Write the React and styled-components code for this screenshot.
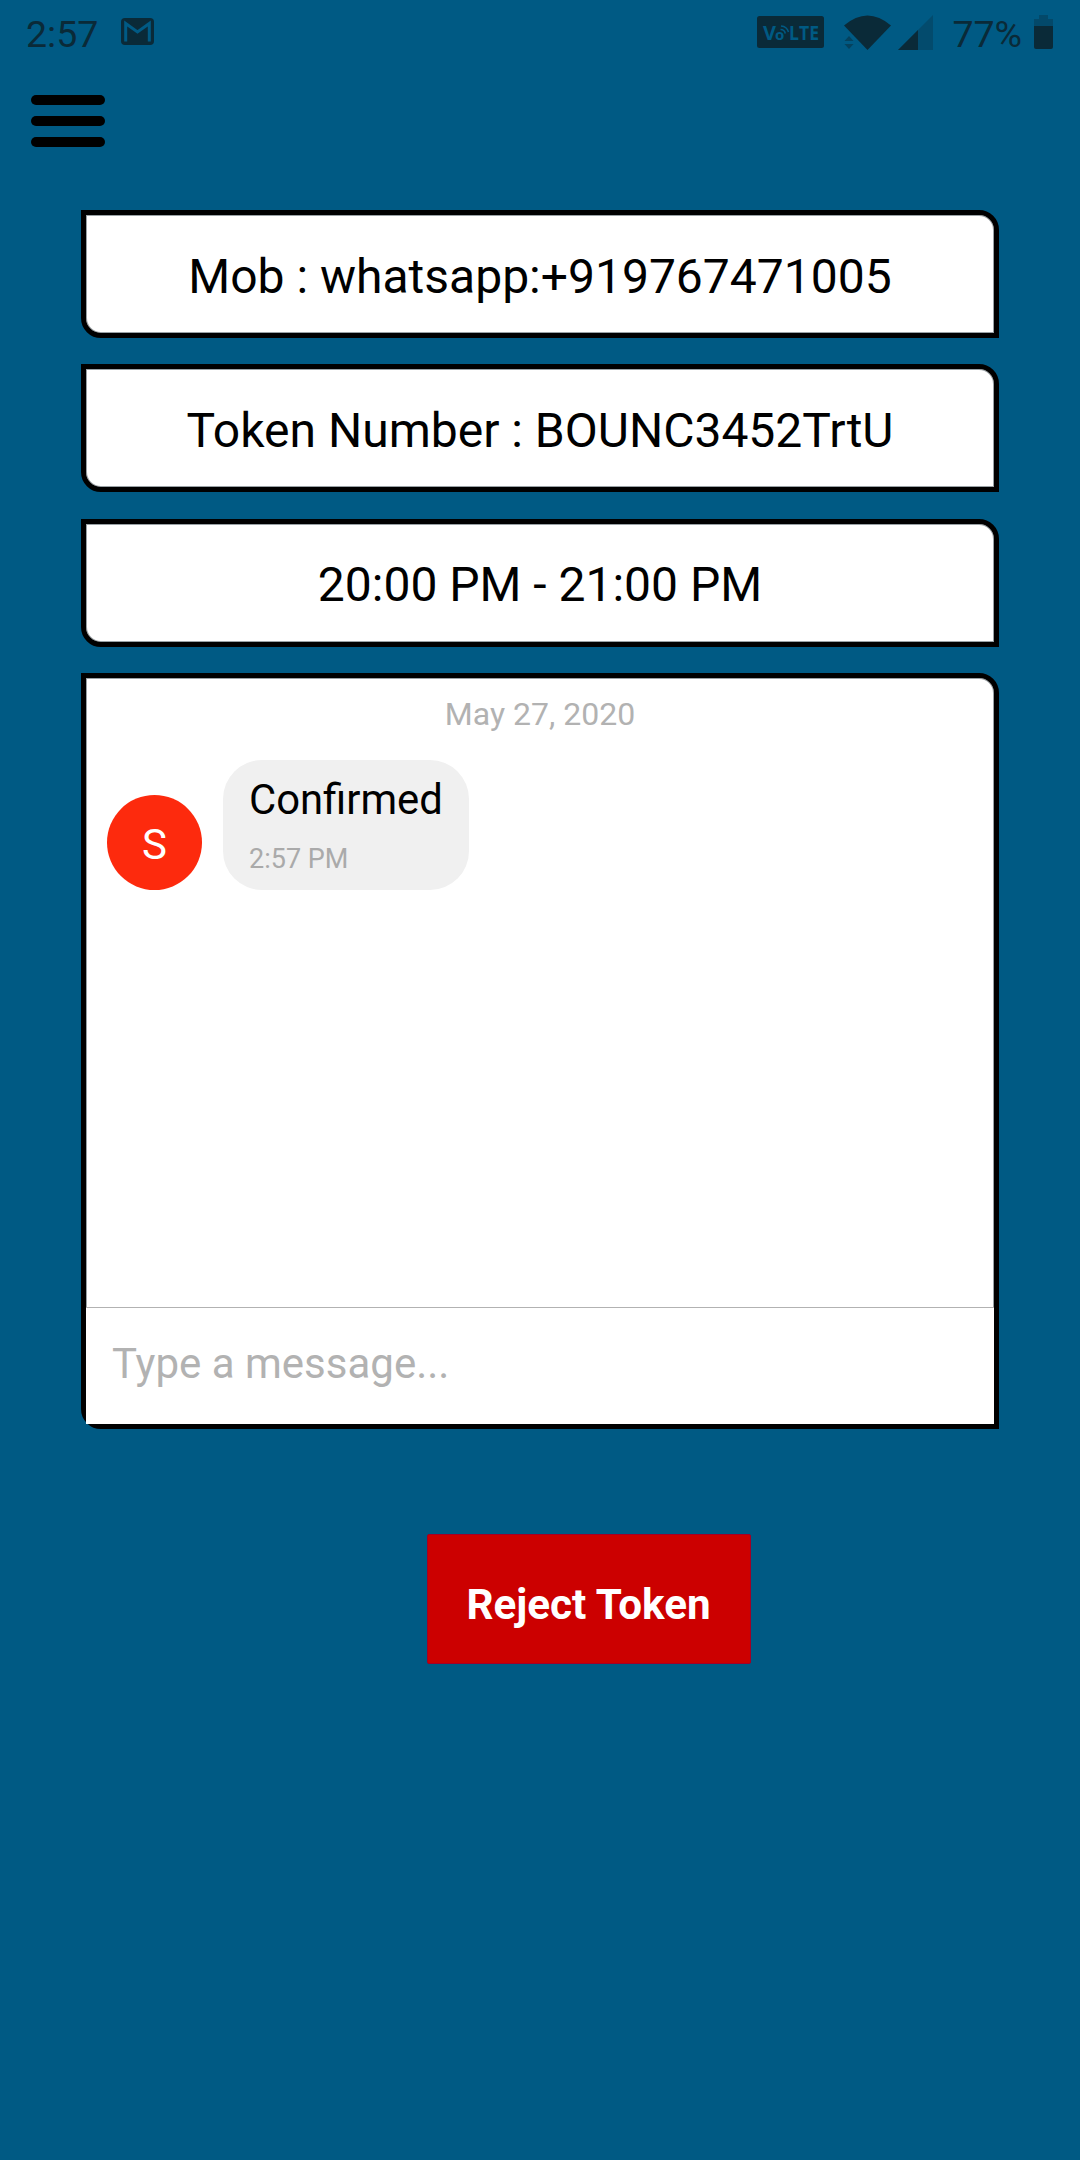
import React from "react";
import styled, { createGlobalStyle } from "styled-components";

const BLUE = "#005a84";
const INK = "#0a2a38";

const Global = createGlobalStyle`
  *, *::before, *::after { box-sizing: border-box; }
  html, body { margin: 0; padding: 0; background: ${BLUE}; }
  body { font-family: Roboto, "Liberation Sans", sans-serif; }
`;

const Screen = styled.main`
  display: flex;
  flex-direction: column;
  width: 1080px;
  height: 2160px;
  background: ${BLUE};
  color: #000;
  overflow: hidden;
`;

const StatusBar = styled.header`
  display: flex;
  align-items: center;
  justify-content: space-between;
  height: 63px;
  padding: 4px 27px 0 26px;
  color: ${INK};
`;

const StatusGroup = styled.div`
  display: flex;
  align-items: center;
`;

const StatusText = styled.span`
  margin-left: ${(p) => p.$gap || 0}px;
  font-size: 37.5px;
  line-height: 44px;
`;

const Icon = styled.svg`
  display: block;
  flex: none;
  margin-left: ${(p) => p.$gap || 0}px;
  margin-top: ${(p) => p.$drop || 0}px;
`;

const MenuButton = styled.button`
  display: flex;
  flex-direction: column;
  gap: 11px;
  width: 74px;
  margin: 32px 0 0 31px;
  padding: 0;
  border: 0;
  background: none;
`;

const MenuBar = styled.span`
  height: 10px;
  border-radius: 5px;
  background: #000;
`;

const Content = styled.section`
  display: flex;
  flex-direction: column;
  align-items: stretch;
  gap: 26.4px;
  width: 918px;
  margin: 63px 0 0 81px;
`;

const Panel = styled.div`
  border: 5px solid #000;
  border-radius: 0 20px 0 20px;
  background: #fff;
  box-shadow: inset 0 0 0 1px rgba(0, 20, 30, 0.4);
`;

const InfoCard = styled(Panel)`
  display: flex;
  align-items: center;
  justify-content: center;
  height: 128px;
  padding-top: 5px;
  font-size: 48px;
  line-height: 56px;
  white-space: nowrap;
`;

const Chat = styled(Panel)`
  display: flex;
  flex-direction: column;
  height: 756px;
`;

const Messages = styled.div`
  display: flex;
  flex: 1;
  flex-direction: column;
`;

const DateLabel = styled.div`
  margin-top: 18px;
  color: #b2b2b2;
  font-size: 32px;
  line-height: 37px;
  text-align: center;
`;

const MessageRow = styled.div`
  display: flex;
  align-items: flex-end;
  gap: 21px;
  margin: 27px 0 0 21px;
`;

const Avatar = styled.div`
  display: flex;
  align-items: center;
  justify-content: center;
  width: 95px;
  height: 95px;
  padding-top: 3px;
  border-radius: 50%;
  background: #fd2a0d;
  color: #fff;
  font-size: 42px;
`;

const Bubble = styled.div`
  width: 246px;
  height: 130px;
  padding: 14px 0 0 26px;
  border-radius: 39px;
  background: #f0f0f0;
`;

const MessageText = styled.div`
  font-size: 41.8px;
  line-height: 52px;
`;

const MessageTime = styled.div`
  margin-top: 18px;
  color: #aaa;
  font-size: 27px;
  line-height: 31px;
`;

const Composer = styled.input`
  display: block;
  width: 100%;
  height: 117px;
  padding: 0 26px 5px;
  border: 0;
  border-top: 1px solid #b2b2b2;
  border-radius: 0;
  outline: 0;
  background: #fff;
  font: 42px Roboto, "Liberation Sans", sans-serif;
  &::placeholder { color: #b2b2b2; opacity: 1; }
`;

const RejectButton = styled.button`
  align-self: flex-start;
  width: 324px;
  height: 130px;
  margin: 105px 0 0 427px;
  padding: 11px 1px 0 0;
  border: 1px solid #a30026;
  border-radius: 2px;
  background: #cc0000;
  color: #fff;
  font: 700 42.2px Roboto, "Liberation Sans", sans-serif;
`;

const details = [
  "Mob : whatsapp:+919767471005",
  "Token Number : BOUNC3452TrtU",
  "20:00 PM - 21:00 PM",
];

const GmailIcon = () => (
  <Icon width="33" height="27" viewBox="0 0 33 27" $gap={23} $drop={-4}>
    <rect width="33" height="27" rx="4" fill={INK} />
    <path d="M4.7 23.5V5.5L16.5 14L28.3 5.5V23.5" fill="none" stroke={BLUE} strokeWidth="3" />
  </Icon>
);

const VolteIcon = () => (
  <Icon width="67" height="32" viewBox="0 0 67 32" $drop={-3}>
    <rect width="67" height="32" rx="2.5" fill={INK} />
    <g fill={BLUE} fontFamily="Open Sans, sans-serif" fontWeight="700">
      <text x="6" y="24" fontSize="19" textLength="13" lengthAdjust="spacingAndGlyphs">V</text>
      <text x="18" y="24" fontSize="15">o</text>
      <text x="32" y="24" fontSize="19" textLength="30" lengthAdjust="spacingAndGlyphs">LTE</text>
    </g>
    <path d="M23.5 13.5q4 0 4.800 4M24 10q6 .5 7.500 6" fill="none" stroke={BLUE} strokeWidth="1.5" />
  </Icon>
);

const WifiIcon = () => (
  <Icon width="47" height="35" viewBox="0 0 47 35" $gap={20} $drop={-3}>
    <path d="M0 10.5Q23.5 -9.5 47 10.5L23.5 35Z" fill={INK} />
    <path d="M0.5 26l4.5-5 4.5 5zM0.5 29h9l-4.5 5z" fill={INK} opacity=".5" />
  </Icon>
);

const SignalIcon = () => (
  <Icon width="35" height="35" viewBox="0 0 35 35" $gap={7} $drop={-3}>
    <path d="M0 35L35 0V35Z" fill={INK} opacity=".3" />
    <path d="M0 35L20 15V35Z" fill={INK} />
  </Icon>
);

const BatteryIcon = () => (
  <Icon width="19" height="34" viewBox="0 0 19 34" $gap={12} $drop={-4}>
    <path d="M0 11V4H5V0H14V4H19V11Z" fill={INK} opacity=".35" />
    <path d="M0 11H19V32a2 2 0 0 1-2 2H2a2 2 0 0 1-2-2Z" fill={INK} />
  </Icon>
);

export default function App() {
  return (
    <Screen>
      <Global />
      <StatusBar>
        <StatusGroup>
          <StatusText>2:57</StatusText>
          <GmailIcon />
        </StatusGroup>
        <StatusGroup>
          <VolteIcon />
          <WifiIcon />
          <SignalIcon />
          <StatusText $gap={19}>77%</StatusText>
          <BatteryIcon />
        </StatusGroup>
      </StatusBar>
      <MenuButton aria-label="Menu">
        <MenuBar />
        <MenuBar />
        <MenuBar />
      </MenuButton>
      <Content>
        {details.map((line) => (
          <InfoCard key={line}>{line}</InfoCard>
        ))}
        <Chat>
          <Messages>
            <DateLabel>May 27, 2020</DateLabel>
            <MessageRow>
              <Avatar>S</Avatar>
              <Bubble>
                <MessageText>Confirmed</MessageText>
                <MessageTime>2:57 PM</MessageTime>
              </Bubble>
            </MessageRow>
          </Messages>
          <Composer placeholder="Type a message..." />
        </Chat>
      </Content>
      <RejectButton>Reject Token</RejectButton>
    </Screen>
  );
}
